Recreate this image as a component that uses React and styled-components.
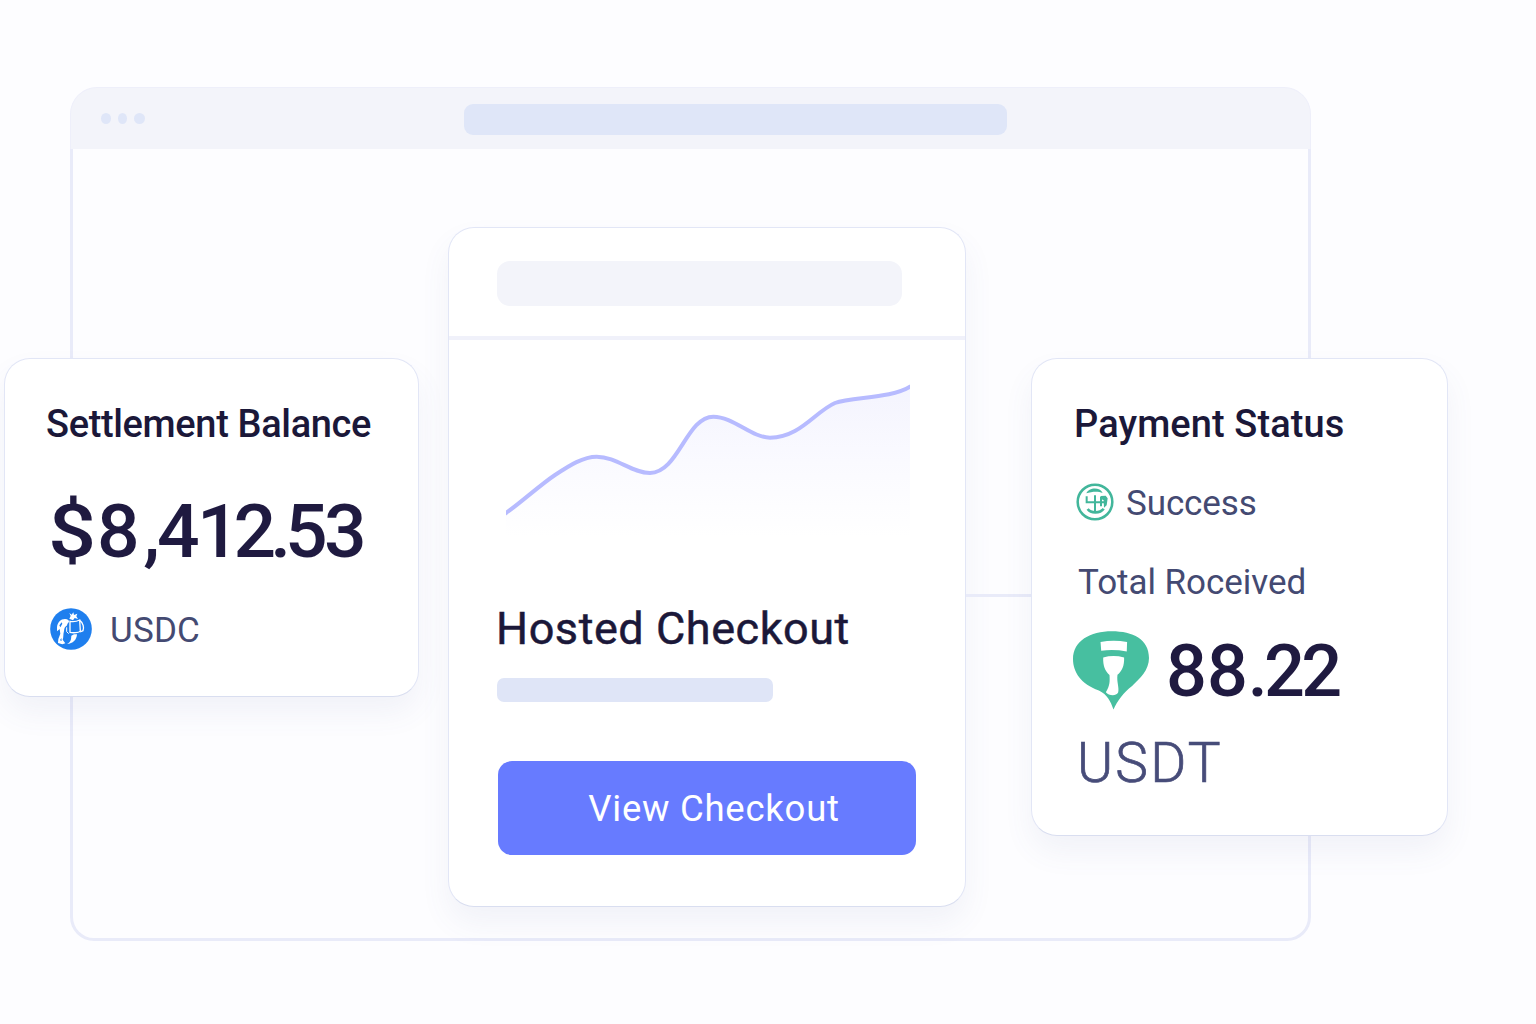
import React from "react";
import styled, { createGlobalStyle } from "styled-components";

const GlobalStyle = createGlobalStyle`
  * {
    box-sizing: border-box;
  }
  body {
    margin: 0;
    background: #fdfdff;
    font-family: Roboto, "Liberation Sans", sans-serif;
  }
`;

const Scene = styled.div`
  display: grid;
  width: 1536px;
  height: 1024px;
  overflow: hidden;
  background: #fdfdff;
  > * {
    grid-area: 1 / 1;
  }
`;

const Browser = styled.div`
  display: flex;
  flex-direction: column;
  width: 1241px;
  height: 854px;
  margin: 87px 0 0 70px;
`;
const BrowserBar = styled.div`
  display: flex;
  align-items: center;
  height: 62px;
  padding-left: 30px;
  border: 1px solid #eeeffa;
  border-bottom: none;
  border-radius: 27px 27px 0 0;
  background: #f3f4fa;
`;
const BrowserBody = styled.div`
  flex: 1;
  border: 3px solid #e9ebf9;
  border-top: none;
  border-radius: 0 0 24px 24px;
`;
const Dots = styled.div`
  display: flex;
  align-items: center;
  gap: 7px;
  width: 362.5px;
`;
const Dot = styled.span`
  width: ${(props) => props.$width}px;
  height: 11px;
  border-radius: 50%;
  background: #dfe6f8;
`;
const AddressBar = styled.div`
  width: 543px;
  height: 31px;
  margin-top: 2px;
  border-radius: 9px;
  background: #dfe6f8;
`;

const Cards = styled.div`
  display: flex;
  align-items: flex-start;
  padding: 227px 0 0 4px;
`;
const Card = styled.div`
  flex: none;
  border: 1.5px solid #e2e6f6;
  border-bottom-color: #d9def0;
  border-radius: 26px;
  background: #fff;
  box-shadow: 0 16px 30px rgba(90, 100, 160, 0.07);
`;
const BalanceCard = styled(Card)`
  width: 415px;
  height: 339px;
  margin: 131px 29px 0 0;
  padding: 45px 0 0 41px;
`;
const StatusCard = styled(Card)`
  width: 417px;
  height: 478px;
  margin-top: 131px;
  padding: 45px 0 0 41px;
`;
const CheckoutCard = styled(Card)`
  width: 518px;
  height: 680px;
`;
const Connector = styled.div`
  flex: none;
  width: 65px;
  height: 3px;
  margin-top: 367px;
  background: #e9ebf9;
`;

const CardTitle = styled.h2`
  margin: 0 0 0 ${(props) => props.$indent || 0}px;
  font-size: 38px;
  font-weight: 500;
  line-height: 40px;
  letter-spacing: ${(props) => props.$spacing}px;
  color: #1b1839;
  white-space: nowrap;
`;
const Balance = styled.div`
  display: flex;
  margin: 47px 0 0 2px;
  font-size: 75px;
  font-weight: 500;
  line-height: 80px;
  color: #1f1a40;
`;
const Currency = styled.span`
  width: 49px;
  transform: scaleX(1.13);
  transform-origin: left;
`;
const Digits = styled.span`
  letter-spacing: ${(props) => props.$spacing}px;
`;
const Row = styled.div`
  display: flex;
  align-items: center;
  gap: ${(props) => props.$gap}px;
  height: ${(props) => props.$height}px;
  margin-top: ${(props) => props.$top}px;
  margin-left: ${(props) => props.$indent || 0}px;
`;
const Label = styled.span`
  font-size: 35px;
  line-height: 40px;
  letter-spacing: ${(props) => props.$spacing || 0}px;
  color: #444a72;
  white-space: nowrap;
`;
const RowLabel = styled(Label)`
  padding-top: 3px;
`;
const Received = styled(Label)`
  display: block;
  margin: 42px 0 0 5px;
`;
const Amount = styled.span`
  padding-top: 4px;
  font-size: 72px;
  font-weight: 500;
  line-height: 78px;
  color: #1f1a40;
`;
const Unit = styled.div`
  margin: 24px 0 0 4px;
  font-size: 55px;
  font-weight: 300;
  line-height: 60px;
  letter-spacing: 2.2px;
  color: #474c79;
  -webkit-text-stroke: 0.7px #474c79;
`;

const CheckoutHeader = styled.div`
  height: 112px;
  padding: 33px 0 0 48px;
  border-bottom: 4px solid #f0f1fa;
`;
const HeaderPlaceholder = styled.div`
  width: 405px;
  height: 45px;
  border-radius: 13px;
  background: #f3f4fa;
`;
const CheckoutBody = styled.div`
  display: flex;
  flex-direction: column;
  align-items: flex-start;
  padding: 30px 0 0 48px;
`;
const ChartSvg = styled.svg`
  width: 404px;
  height: 180px;
  margin-left: 9px;
`;
const Heading = styled.h1`
  margin: 54px 0 0 -1px;
  font-size: 45px;
  font-weight: 400;
  line-height: 50px;
  letter-spacing: 0.55px;
  color: #1b1839;
  -webkit-text-stroke: 0.5px #1b1839;
  white-space: nowrap;
`;
const TextPlaceholder = styled.div`
  width: 276px;
  height: 24px;
  margin-top: 24px;
  border-radius: 7px;
  background: #dfe5f7;
`;
const Button = styled.button`
  width: 418px;
  height: 94px;
  margin: 59px 0 0 1px;
  padding: 1px 0 0 14px;
  border: none;
  border-radius: 14px;
  background: #677bff;
  color: #fff;
  font-family: inherit;
  font-size: 36.5px;
  letter-spacing: 0.75px;
`;

const UsdcIcon = () => (
  <svg width="42" height="42" viewBox="29 26 126 126">
    <circle cx="92" cy="89" r="62.5" fill="#1f7fee" />
    <g fill="#fff">
      <path d="M50 84 C51 68 63 58 75 59 C82 60 87 62 86 69 C80 71 82 79 77 81 C73 83 72 88 71 95 C68 106 70 115 67 121 L75 132 L66 135 L53 131 L54 119 L60 103 L58 89 L50 96 Z" />
      <path d="M87 58 L91 50 L87 41 L94 46 L99 39 L101 47 L111 43 L108 51 L113 59 L103 56 L98 63 Z" />
      <path d="M101 105 L110 105 C109 122 98 133 80 134 C93 127 92 119 93 109 Z" />
    </g>
    <g fill="none" stroke="#fff" strokeWidth="4">
      <path d="M89 66 C99 68 110 66 118 62 L120 95 C116 101 96 101 89 99 Z" />
      <path d="M119 64 C128 70 132 86 128 94 L119 98" />
      <path d="M79 84 L79 97 L85 103" strokeWidth="3" />
    </g>
    <path
      d="M57 78 L64 69 L66 73 L60 84 Z M59 123 L63 116 L64 125 Z"
      fill="#1f7fee"
    />
  </svg>
);

const SuccessIcon = () => (
  <svg width="38" height="38" viewBox="48 40 114 114">
    <circle
      cx="105"
      cy="97"
      r="52"
      fill="none"
      stroke="#42b69b"
      strokeWidth="7.5"
    />
    <path
      d="M79 71 C86 53 120 51 128 70 C115 64 96 65 79 71 Z"
      fill="#42b69b"
    />
    <g fill="none" stroke="#42b69b" strokeWidth="6">
      <path d="M80 80 V98 H136" />
      <path d="M105 77 V128" />
      <path d="M123 81 V110" />
      <path d="M83 118 C92 131 120 132 131 117" strokeWidth="8" />
    </g>
    <path
      d="M122 79 L137 78 L143 86 L140 107 L132 114 L131 92 L122 87 Z"
      fill="#42b69b"
    />
  </svg>
);

const UsdtIcon = () => (
  <svg width="76" height="79" viewBox="38 31 229 237">
    <path
      d="M155 31 C218 31 267 55 267 112 C267 148 240 174 216 196 C190 216 172 240 160 267 C151 242 142 223 116 210 C62 190 38 155 38 115 C38 60 90 31 155 31 Z"
      fill="#47bfa0"
    />
    <g fill="#fff">
      <path d="M121 64 Q160 55 201 64 L200 92 Q160 85 123 90 Z" />
      <path d="M129 110 Q160 101 192 110 C193 136 185 152 172 162 C169 185 178 200 174 216 C167 228 145 225 137 215 C150 195 149 180 148 163 C135 151 128 135 129 110 Z" />
    </g>
  </svg>
);

const curve =
  "M48 429 C90 400 150 345 195 315 C240 285 280 260 320 260 C380 260 425 309 480 309 C565 309 590 140 670 140 C730 140 785 203 840 203 C930 203 975 125 1035 99 C1085 80 1205 86 1260 50";

const Chart = () => (
  <ChartSvg viewBox="48 0 1212 540">
    <defs>
      <linearGradient id="area" x1="0" y1="0" x2="0" y2="1">
        <stop offset="0" stopColor="#f4f4fe" />
        <stop offset="0.5" stopColor="#fafaff" />
        <stop offset="1" stopColor="#ffffff" />
      </linearGradient>
    </defs>
    <path d={`${curve} V500 H48 Z`} fill="url(#area)" />
    <path
      d={`M40 435 L48 429 ${curve} L1268 46`}
      fill="none"
      stroke="#b7bbff"
      strokeWidth="12"
    />
  </ChartSvg>
);

const App = () => {
  return (
    <Scene>
      <GlobalStyle />
      <Browser>
        <BrowserBar>
          <Dots>
            <Dot $width={10} />
            <Dot $width={9} />
            <Dot $width={11} />
          </Dots>
          <AddressBar />
        </BrowserBar>
        <BrowserBody />
      </Browser>
      <Cards>
        <BalanceCard>
          <CardTitle $spacing={-0.35}>Settlement Balance</CardTitle>
          <Balance>
            <Currency>$</Currency>
            <Digits $spacing={3.5}>8</Digits>
            <Digits $spacing={-2.8}>,4</Digits>
            <Digits $spacing={-6}>12.</Digits>
            <Digits $spacing={-3.7}>53</Digits>
          </Balance>
          <Row $height={42} $top={37} $gap={18} $indent={4}>
            <UsdcIcon />
            <RowLabel $spacing={0.2}>USDC</RowLabel>
          </Row>
        </BalanceCard>
        <CheckoutCard>
          <CheckoutHeader>
            <HeaderPlaceholder />
          </CheckoutHeader>
          <CheckoutBody>
            <Chart />
            <Heading>Hosted Checkout</Heading>
            <TextPlaceholder />
            <Button>View Checkout</Button>
          </CheckoutBody>
        </CheckoutCard>
        <Connector />
        <StatusCard>
          <CardTitle $spacing={0.1} $indent={1}>
            Payment Status
          </CardTitle>
          <Row $height={38} $top={39} $gap={12} $indent={3}>
            <SuccessIcon />
            <RowLabel $spacing={-0.1}>Success</RowLabel>
          </Row>
          <Received $spacing={-0.05}>Total Roceived</Received>
          <Row $height={78} $top={28} $gap={17}>
            <UsdtIcon />
            <Amount>
              <Digits $spacing={0}>88</Digits>
              <Digits $spacing={-3.8}>.22</Digits>
            </Amount>
          </Row>
          <Unit>USDT</Unit>
        </StatusCard>
      </Cards>
    </Scene>
  );
};

export default App;
